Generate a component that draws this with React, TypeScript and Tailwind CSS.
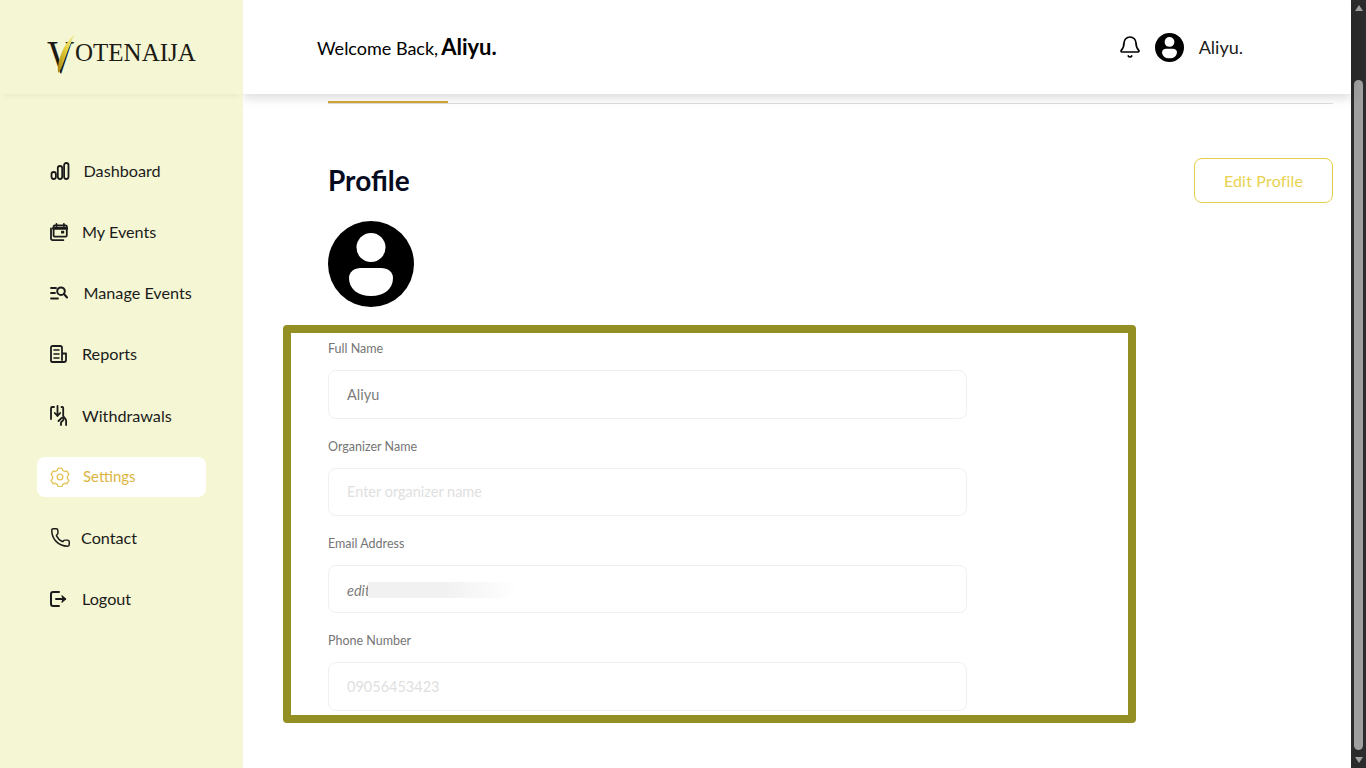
import { Bell, Phone } from 'lucide-react'
import type { ReactNode } from 'react'

const stroke = {
  fill: 'none',
  stroke: 'currentColor',
  strokeWidth: 1.8,
  strokeLinecap: 'round' as const,
  strokeLinejoin: 'round' as const,
}

const DashboardIcon = () => (
  <svg width="20" height="18" viewBox="0 0 20 18" {...stroke}>
    <rect x="1.5" y="10" width="4.4" height="7" rx="2.2" />
    <rect x="7.8" y="4" width="4.4" height="13" rx="2.2" />
    <rect x="14.1" y="1" width="4.4" height="16" rx="2.2" />
  </svg>
)

const EventsIcon = () => (
  <svg width="18" height="18" viewBox="0 0 18 18" {...stroke}>
    <rect x="3.6" y="2.4" width="13.2" height="11.2" rx="1.2" />
    <path d="M3.6 5.2h13.2" strokeWidth="3" />
    <path d="M6.5 1v2M13.9 1v2" />
    <path d="M1 5.5v9.8a1.8 1.8 0 0 0 1.8 1.8h10.6" />
    <rect x="11" y="7.8" width="3.2" height="2.8" rx=".6" fill="currentColor" stroke="none" />
  </svg>
)

const ManageIcon = () => (
  <svg width="18" height="14" viewBox="0 0 18 14" {...stroke}>
    <path d="M1 2h5M1 7h4M1 12.5h7" />
    <circle cx="11" cy="5.2" r="3.8" strokeWidth="2" />
    <path d="M14 8l3 3.500" strokeWidth="2" />
  </svg>
)

const ReportsIcon = () => (
  <svg width="17" height="18" viewBox="0 0 17 18" {...stroke}>
    <path d="M12 15V2.6A1.6 1.6 0 0 0 10.4 1H2.6A1.6 1.6 0 0 0 1 2.6v12.8A1.6 1.6 0 0 0 2.6 17H14a2 2 0 0 0 2-2V8.5h-4" />
    <path d="M4 5h5M4 9h5M4 13h5" strokeWidth="1.6" />
  </svg>
)

const WithdrawIcon = () => (
  <svg width="18" height="21" viewBox="0 0 18 21" {...stroke}>
    <path d="M4 2H2.2A1.2 1.2 0 0 0 1 3.2v10.8" />
    <path d="M7.5 1v10M4.8 8l2.7 3 2.7-3" />
    <path d="M11.5 2h.7a1 1 0 0 1 1 1v8l2.3 3a3 3 0 0 1 .6 1.8V20" />
    <path d="M8.5 16l2.900-2.800a1.300 1.300 0 0 1 1.800 1.900L11 17.400v2.600" />
  </svg>
)

const GearIcon = () => (
  <svg width="20" height="20" viewBox="0 0 24 24" fill="none" stroke="currentColor" strokeWidth="1.6" strokeLinejoin="round">
    <circle cx="12" cy="12" r="3.4" />
    <path d="M9.7 1.9h4.6l.9 2.6 2.5 1.4 2.7-.5 2.3 4-1.8 2.1v2.9l1.8 2.1-2.3 4-2.7-.5-2.5 1.4-.9 2.6H9.7l-.9-2.6-2.5-1.4-2.7.5-2.3-4 1.8-2.1v-2.9L1.3 9.4l2.3-4 2.7.5 2.5-1.4z" transform="translate(0 -.5)" />
  </svg>
)

const LogoutIcon = () => (
  <svg width="17" height="16" viewBox="0 0 17 16" {...stroke}>
    <path d="M9 1H3a2 2 0 0 0-2 2v10a2 2 0 0 0 2 2h6" strokeWidth="2" />
    <path d="M6 8h9" strokeWidth="2" />
    <path d="M12 5l3.5 3-3.5 3" fill="currentColor" strokeWidth="1.4" />
  </svg>
)

const UserCircle = ({ size }: { size: number }) => (
  <svg width={size} height={size} viewBox="0 0 86 86">
    <circle cx="43" cy="43" r="43" fill="#000" />
    <circle cx="43" cy="26.5" r="14.5" fill="#fff" />
    <path d="M33 47H53C60 47 65 51 65 57C65 68 56 75 43 75C30 75 21 68 21 57C21 51 26 47 33 47Z" fill="#fff" />
  </svg>
)

const navItems: { label: string; icon: ReactNode; gap: string; nudge?: string }[] = [
  { label: 'Dashboard', icon: <DashboardIcon />, gap: 'gap-[13.5px]' },
  { label: 'My Events', icon: <EventsIcon />, gap: 'gap-[14px]' },
  { label: 'Manage Events', icon: <ManageIcon />, gap: 'gap-[15.5px]' },
  { label: 'Reports', icon: <ReportsIcon />, gap: 'gap-[15px]' },
  { label: 'Withdrawals', icon: <WithdrawIcon />, gap: 'gap-[14px]', nudge: 'pt-[2px]' },
  { label: 'Settings', icon: <GearIcon />, gap: 'gap-[13px]' },
  { label: 'Contact', icon: <Phone size={21} strokeWidth={1.7} />, gap: 'gap-[10px]' },
  { label: 'Logout', icon: <LogoutIcon />, gap: 'gap-[15px]' },
]

function Logo() {
  return (
    <div className="h-[94px] flex items-center pl-[47px] shadow-[0_6px_6px_-4px_rgba(0,0,0,0.05)]">
      <div className="relative pl-[28px] mt-[11px] text-[#1d1b14] font-['Liberation_Serif',serif]">
        <span className="block text-[25px] leading-none">OTENAIJA</span>
        <span className="absolute left-0 -top-[5px] text-[46px] leading-none scale-x-[.82] origin-left">V</span>
        <svg className="absolute left-[8px] -top-[7px]" width="24" height="44" viewBox="0 0 24 44">
          <defs>
            <linearGradient id="swoosh" x1="0" y1="1" x2="1" y2="0">
              <stop offset="0" stopColor="#a8830f" />
              <stop offset="0.55" stopColor="#e6d23c" />
              <stop offset="1" stopColor="#eef0b8" />
            </linearGradient>
          </defs>
          <path d="M3 40C2 28 8 11 20 1 14 13 10 26 6 36z" fill="url(#swoosh)" />
        </svg>
      </div>
    </div>
  )
}

function Sidebar() {
  return (
    <aside className="relative z-20 w-[243px] shrink-0 bg-[#f5f6d3]">
      <Logo />
      <nav className="mt-[56.8px] flex flex-col gap-[21.2px] pl-[37px]">
        {navItems.map((item) => {
          const active = item.label === 'Settings'
          return (
            <div
              key={item.label}
              className={`w-[169px] h-10 flex items-center pl-[13px] rounded-lg ${item.gap} ${
                active ? 'bg-white text-[#dcb441] text-[15px]' : 'text-[#1b1b1b] text-[16.2px]'
              }`}
            >
              <span className={active ? 'text-[#e3c65c] flex' : 'flex'}>{item.icon}</span>
              <span className={item.nudge}>{item.label}</span>
            </div>
          )
        })}
      </nav>
    </aside>
  )
}

function Header() {
  return (
    <header className="relative z-10 h-[94px] shrink-0 bg-white flex items-center justify-between pl-[74px] pr-[108px] shadow-[0_4px_10px_rgba(0,0,0,0.14)]">
      <div className="text-black text-lg flex items-baseline gap-[3px]">
        <span>Welcome Back,</span>
        <span className="text-[22px] font-bold">Aliyu.</span>
      </div>
      <div className="flex items-center">
        <Bell size={24} strokeWidth={1.7} className="text-black" />
        <span className="ml-[13px] flex">
          <UserCircle size={29} />
        </span>
        <span className="ml-[15px] text-lg text-[#1b1b1b]">Aliyu.</span>
      </div>
    </header>
  )
}

function Field({ label, children }: { label: string; children: ReactNode }) {
  return (
    <div className="mb-[17px]">
      <div className="h-[21px] leading-[22px] text-[12.5px] text-[#757575] mb-[11px]">{label}</div>
      <div className="w-[639px] h-[48.3px] border border-[#f0f0f0] rounded-lg flex items-center pl-[18px] pt-px text-[14.5px]">
        {children}
      </div>
    </div>
  )
}

function ProfileForm() {
  return (
    <section className="w-[853px] h-[398px] -ml-[45px] mt-[18px] border-8 border-[#948f22] rounded-[4px] pl-[37px] pt-[5.4px]">
      <Field label="Full Name">
        <span className="text-[#7d7d7d]">Aliyu</span>
      </Field>
      <Field label="Organizer Name">
        <span className="text-[#e0e0e0]">Enter organizer name</span>
      </Field>
      <Field label="Email Address">
        <span className="italic text-[#7d7d7d] pt-[2px]">edit</span>
        <span className="-ml-[2px] w-[150px] h-4 bg-gradient-to-r from-[#f1f1f1] via-[#f1f1f1] to-white" />
      </Field>
      <Field label="Phone Number">
        <span className="text-[#e0e0e0]">09056453423</span>
      </Field>
    </section>
  )
}

function Scrollbar() {
  return (
    <div className="w-[15px] shrink-0 bg-[#2b2b2b] flex flex-col items-center">
      <div className="mt-[5px] w-0 h-0 border-x-[4.5px] border-x-transparent border-b-[6px] border-b-[#a0a0a0]" />
      <div className="mt-[69px] w-[9px] h-[670px] rounded-full bg-[#9f9f9f]" />
      <div className="mt-[7px] w-0 h-0 border-x-[4.5px] border-x-transparent border-t-[6px] border-t-[#a0a0a0]" />
    </div>
  )
}

export default function App() {
  return (
    <div className="flex h-screen overflow-hidden bg-white font-['Lato',sans-serif]">
      <Sidebar />
      <main className="flex-1 min-w-0 flex flex-col">
        <Header />
        <div className="pl-[85px] pr-[18px] pt-[7px]">
          <div className="w-[120px] h-[2px] bg-[#d4a936]" />
          <div className="h-px bg-[#dedede]" />
          <div className="mt-[54px] flex items-center justify-between">
            <h1 className="text-[28px] font-bold text-[#050a1e] -mt-[2px]">Profile</h1>
            <button className="w-[139px] h-[45px] border border-[#e3cf45] rounded-lg text-base tracking-[0.18px] text-[#e8d24f]">
              Edit Profile
            </button>
          </div>
          <div className="mt-[18px] flex">
            <UserCircle size={86} />
          </div>
          <ProfileForm />
        </div>
      </main>
      <Scrollbar />
    </div>
  )
}
